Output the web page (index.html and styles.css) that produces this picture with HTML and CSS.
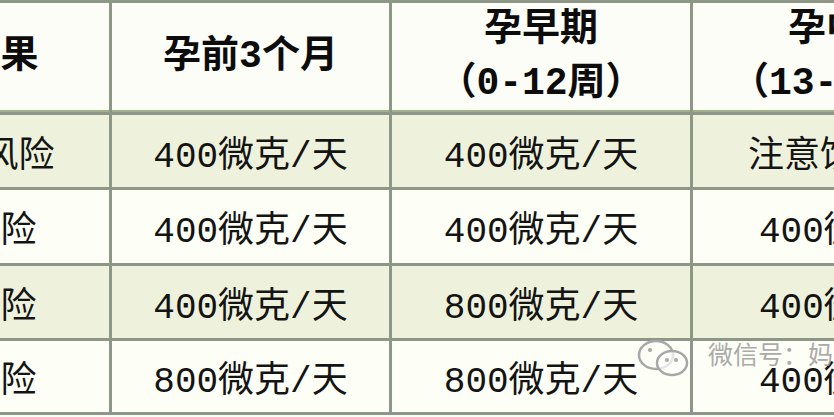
FILE: index.html
```html
<!DOCTYPE html>
<html lang="zh-CN">
<head>
<meta charset="utf-8">
<title>叶酸补充</title>
<link rel="stylesheet" href="styles.css">
</head>
<body>
<div class="page">
  <div class="grid">
    <div class="cell head">结果</div>
    <div class="cell head">孕前3个月</div>
    <div class="cell head two">孕早期<br>（0-12周）</div>
    <div class="cell head two">孕中期<br>（13-27周）</div>

    <div class="cell green">低风险</div>
    <div class="cell green">400微克/天</div>
    <div class="cell green">400微克/天</div>
    <div class="cell green col4 note">注意饮食补充</div>

    <div class="cell light">风险</div>
    <div class="cell light">400微克/天</div>
    <div class="cell light">400微克/天</div>
    <div class="cell light col4">400微克/天</div>

    <div class="cell green">风险</div>
    <div class="cell green">400微克/天</div>
    <div class="cell green">800微克/天</div>
    <div class="cell green col4">400微克/天</div>

    <div class="cell light">风险</div>
    <div class="cell light">800微克/天</div>
    <div class="cell light">800微克/天</div>
    <div class="cell light col4">400微克/天</div>
  </div>

  <div class="watermark">
    <svg class="wm-icon" width="56" height="42" viewBox="0 0 56 42">
      <ellipse cx="20" cy="17" rx="17" ry="14" fill="none" stroke="#a8a8a8" stroke-width="2.5"/>
      <ellipse cx="36" cy="25" rx="15" ry="12" fill="rgba(255,255,255,0.7)" stroke="#a8a8a8" stroke-width="2.5"/>
      <circle cx="31" cy="22" r="2" fill="#a8a8a8"/>
      <circle cx="40" cy="22" r="2" fill="#a8a8a8"/>
      <circle cx="14" cy="12" r="2" fill="#a8a8a8"/>
    </svg>
    <span class="wm-text">微信号：妈妈</span>
  </div>
</div>
</body>
</html>
```

FILE: styles.css
```css
html, body {
  margin: 0;
  padding: 0;
  background: #fbfcf6;
  overflow: hidden;
}

.page {
  position: relative;
  width: 834px;
  height: 417px;
  overflow: hidden;
}

.grid {
  display: grid;
  grid-template-columns: 217px 277px 298px 304px;
  grid-template-rows: 109px 72px 73px 72px 71px;
  gap: 3px;
  padding: 3px;
  width: max-content;
  margin-left: -111px;
  background: #8e9787;
}

.cell {
  display: flex;
  align-items: center;
  justify-content: center;
  text-align: center;
  white-space: nowrap;
  overflow: hidden;
  font-family: "Liberation Mono", "Noto Sans CJK SC", monospace;
  font-size: 36px;
  color: #141414;
}

.head {
  background: #fcfdf7;
  border-bottom: 2px solid #a3b08c;
  font-weight: 700;
  font-size: 38px;
  line-height: 54px;
  color: #0c0c0c;
}

.green {
  background: #eef2dd;
}

.light {
  background: #fdfef6;
}

.col4 {
  justify-content: flex-start;
  padding-left: 66px;
}

.col4.note {
  padding-left: 55px;
}

.watermark {
  position: absolute;
  left: 636px;
  top: 338px;
  display: flex;
  align-items: flex-start;
  gap: 16px;
  white-space: nowrap;
}

.wm-icon {
  flex: none;
}

.wm-text {
  font-family: "Noto Sans CJK SC", sans-serif;
  font-size: 25px;
  line-height: 30px;
  color: #9c9c9c;
  opacity: 0.85;
  white-space: nowrap;
}
```
